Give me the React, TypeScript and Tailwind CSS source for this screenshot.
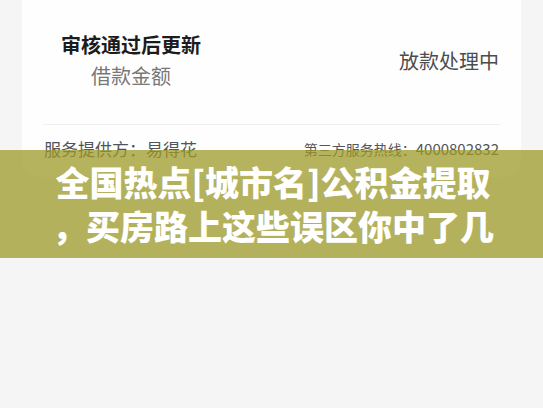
const amount = {
  title: "审核通过后更新",
  label: "借款金额",
  status: "放款处理中",
};

const headline = ["全国热点[城市名]公积金提取", "，买房路上这些误区你中了几"];

function LoanCard() {
  return (
    <section className="mx-[22px] rounded-b-2xl bg-[#fefefe] px-[21px] pt-[29px] pb-4">
      <div className="flex items-center justify-between border-b border-[#f0f0f0] pb-[33px] text-[20px] leading-[31px]">
        <div className="pl-[18px] text-center">
          <h2 className="font-bold text-[#1c1c1c]">{amount.title}</h2>
          <p className="text-[#777777]">{amount.label}</p>
        </div>
        <p className="pr-px text-[#4c4c4c]">{amount.status}</p>
      </div>

      <div className="flex items-center justify-between px-px pt-3 leading-6 whitespace-nowrap text-[#50555a]">
        <p className="text-[17px]">服务提供方：易得花</p>
        <p className="text-[14px]">
          第三方服务热线：<span className="text-[15px]">4000802832</span>
        </p>
      </div>
    </section>
  );
}

/** Translucent headline strip that lies over the lower edge of the card. */
function Banner() {
  return (
    <div className="absolute inset-x-0 top-[150px] bg-[#9e9928]/75 py-[10px] pl-[3px]">
      <h1 className="text-center text-[34px] leading-[44px] font-black whitespace-nowrap text-white">
        {headline.map((line) => (
          <span key={line} className="block">
            {line}
          </span>
        ))}
      </h1>
    </div>
  );
}

export default function App() {
  return (
    <main className="relative min-h-screen bg-[#f5f5f5] font-['Noto_Sans_CJK_SC',sans-serif]">
      <LoanCard />
      <Banner />
    </main>
  );
}
